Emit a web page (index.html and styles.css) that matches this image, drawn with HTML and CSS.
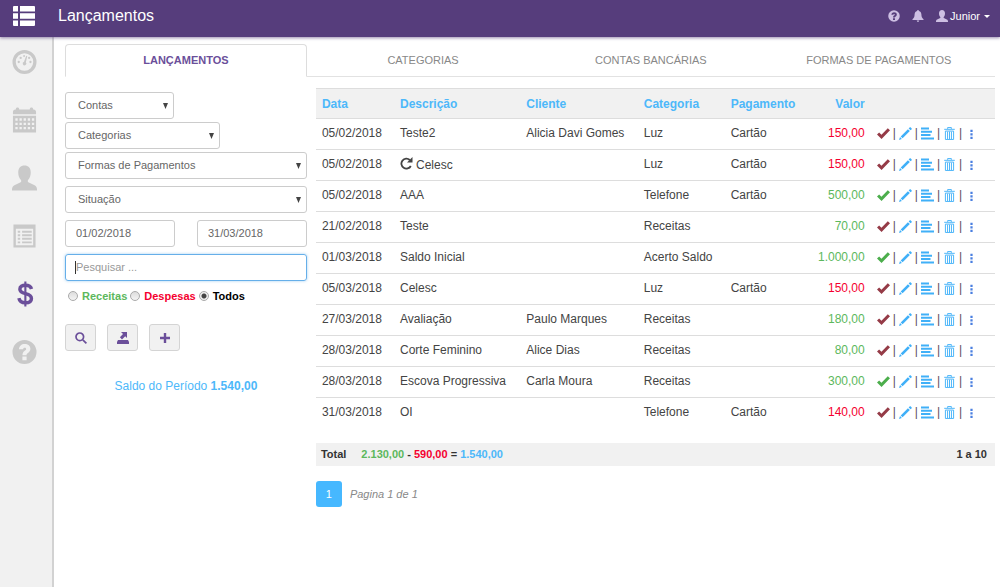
FILE: index.html
```html
<!DOCTYPE html>
<html lang="pt-br">
<head>
    <meta charset="UTF-8">
    <meta name="viewport" content="width=device-width, initial-scale=1">
    <title>Lançamentos</title>
    <link rel="stylesheet" href="styles.css">
</head>
<body>
    <svg class="sprite" aria-hidden="true">
        <symbol id="i-user" viewBox="0 0 26 26">
            <path d="M13 0c-4 0-6.500 2.800-6.500 7 0 3.500 1 6.200 2.800 8 .5.6.4 1.900-.3 2.300L2.500 20.500C.8 21.400 0 22.800 0 25v1h26v-1c0-2.200-.8-3.600-2.500-4.500L17 17.300c-.7-.4-.8-1.700-.3-2.300 1.800-1.800 2.800-4.500 2.800-8 0-4.200-2.500-7-6.500-7z"/>
        </symbol>
        <symbol id="i-help" viewBox="0 0 26 26">
            <path fill-rule="evenodd" d="M13 .5a12.500 12.500 0 1 0 0 25 12.500 12.500 0 0 0 0-25zM7.300 10.200C7.500 6.700 9.800 4.700 13.200 4.700c3.500 0 5.900 1.900 5.900 4.900 0 2.300-1.200 3.500-2.500 4.400-1.100.8-1.500 1.200-1.500 2.400h-4.200c0-2.600.9-3.700 2.300-4.700 1-.7 1.500-1.100 1.500-1.900 0-.8-.6-1.300-1.500-1.300-1.100 0-1.600.7-1.700 1.700zM10.800 17.800h4.400v3.900h-4.400z"/>
        </symbol>
        <symbol id="i-check" viewBox="0 0 14 12">
            <path d="M0 7.200 2.300 5l2.500 2.300L11.600.3 14 2.500 4.900 12z"/>
        </symbol>
        <symbol id="i-pencil" viewBox="0 0 14 14">
            <path d="M11.400.5c.4-.4.900-.4 1.300 0l.8.8c.4.400.4.900 0 1.300l-1 1-2.100-2.100zM9.600 2.300l2.100 2.100-7.800 7.800-2.100-2.100zM1.100 10.900l2 2L0 14z"/>
        </symbol>
        <symbol id="i-lines" viewBox="0 0 13 12">
            <path d="M0 0h8v2H0zM0 3.300h11v2H0zM0 6.600h9.500v2H0zM0 10h13v2H0z"/>
        </symbol>
        <symbol id="i-trash" viewBox="0 0 12 14">
            <path d="M4 2V.6h4V2M.3 2.500h11.400M1.600 4.400h8.800v9H1.600zM3.900 5v8M6 5v8M8.100 5v8" fill="none" stroke="currentColor" stroke-width="1"/>
        </symbol>
        <symbol id="i-dots" viewBox="0 0 14 14">
            <path d="M5.800 3h2.400v2.400H5.800zM5.800 6.800h2.400v2.400H5.800zM5.800 10.600h2.400V13H5.800z"/>
        </symbol>
        <symbol id="i-repeat" viewBox="0 0 13 13">
            <path d="M10.800 9A5 5 0 1 1 9.800 3" fill="none" stroke="currentColor" stroke-width="1.800"/>
            <path d="M12.500 0v5.500H7z"/>
        </symbol>
    </svg>

    <header class="topbar">
        <button type="button" class="menu-btn" aria-label="Menu">
            <svg viewBox="0 0 22 20"><path d="M1 0h4v5.500H0V1a1 1 0 0 1 1-1zM7 0h14a1 1 0 0 1 1 1v4.500H7zM0 7.300h5v5.400H0zM7 7.300h15v5.400H7zM0 14.500h5V20H1a1 1 0 0 1-1-1zM7 14.500h15V19a1 1 0 0 1-1 1H7z"/></svg>
        </button>
        <h1>Lançamentos</h1>
        <nav class="user-nav">
            <a href="#" aria-label="Ajuda"><svg><use href="#i-help"/></svg></a>
            <a href="#" aria-label="Notificações">
                <svg viewBox="0 0 12 13"><path d="M6 0c.7 0 1 .4 1 1 1.800.6 2.700 2 2.700 4 0 2.500.6 3.800 2.300 5v.8H0V10c1.700-1.200 2.300-2.500 2.300-5 0-2 .9-3.400 2.700-4 0-.6.3-1 1-1zM4.600 11.500h2.800C7.200 12.500 6.700 13 6 13s-1.200-.5-1.400-1.500z"/></svg>
            </a>
            <a href="#" class="user"><svg><use href="#i-user"/></svg>Junior <span class="caret"></span></a>
        </nav>
    </header>

    <div class="wrapper">
        <nav class="sidebar">
            <a href="#" aria-label="Painel">
                <svg viewBox="0 0 26 26">
                    <circle cx="13" cy="13" r="10.800" fill="none" stroke="currentColor" stroke-width="3.400"/>
                    <path d="M14.800 6.500l1.100.4-1.500 6.300a1.900 1.900 0 1 1-1.900-.5z"/>
                    <circle cx="7" cy="13" r="1.200"/><circle cx="9" cy="8.800" r="1.200"/><circle cx="12.600" cy="6.700" r="1"/><circle cx="17.800" cy="8.800" r="1.200"/><circle cx="19.200" cy="13" r="1.200"/>
                </svg>
            </a>
            <a href="#" aria-label="Agenda">
                <svg viewBox="0 0 26 26">
                    <path d="M1 7V4.500C1 3 2 2 3.500 2H4c0-1.300.7-2 1.700-2s1.800.7 1.800 2h11c0-1.300.7-2 1.700-2S22 .7 22 2h.5C24 2 25 3 25 4.500V7zM1 8.500h24V26H1z"/>
                    <path class="holes" d="M3.500 12.500h20M3.500 17h20M3.500 21.500h20" fill="none" stroke-width="2.400" stroke-dasharray="2.400 1.900"/>
                </svg>
            </a>
            <a href="#" aria-label="Clientes"><svg><use href="#i-user"/></svg></a>
            <a href="#" aria-label="Relatórios">
                <svg viewBox="0 0 26 26">
                    <path fill-rule="evenodd" d="M1.500 1h23v24h-23zM4 5.500v17h18v-17z"/>
                    <path d="M6 7.500h2.500v2H6zM10.500 7.500h10v2h-10zM6 11.200h2.500v2H6zM10.500 11.200h10v2h-10zM6 14.900h2.500v2H6zM10.500 14.900h10v2h-10zM6 18.600h2.500v2H6zM10.500 18.600h10v2h-10z"/>
                </svg>
            </a>
            <a href="#" class="active" aria-label="Financeiro">
                <svg viewBox="0 0 26 26">
                    <path d="M20.300 7.800C19.500 5 17.300 3.900 14 3.900c-3.500 0-5.800 1.500-5.800 4.100 0 6.300 12 2.900 12 9.600 0 3-2.500 4.600-6.200 4.600-3.800 0-6.200-1.600-6.800-4.900" fill="none" stroke="currentColor" stroke-width="3.600"/>
                    <path d="M12.800 0h2.200v26h-2.200z"/>
                </svg>
            </a>
            <a href="#" aria-label="Suporte"><svg><use href="#i-help"/></svg></a>
        </nav>

        <main class="content">
            <nav class="tabs">
                <a href="#" class="active">LANÇAMENTOS</a>
                <a href="#">CATEGORIAS</a>
                <a href="#">CONTAS BANCÁRIAS</a>
                <a href="#">FORMAS DE PAGAMENTOS</a>
            </nav>

            <div class="panels">
                <form class="filters">
                    <select class="field contas" aria-label="Contas"><option>Contas</option></select>
                    <select class="field categorias" aria-label="Categorias"><option>Categorias</option></select>
                    <select class="field formas" aria-label="Formas de Pagamentos"><option>Formas de Pagamentos</option></select>
                    <select class="field situacao" aria-label="Situação"><option>Situação</option></select>
                    <div class="dates">
                        <input type="text" class="field" value="01/02/2018" aria-label="Data inicial">
                        <input type="text" class="field" value="31/03/2018" aria-label="Data final">
                    </div>
                    <input type="text" class="field search" placeholder="Pesquisar ..." aria-label="Pesquisar">
                    <div class="radios">
                        <label class="green"><input type="radio" name="tipo">Receitas</label>
                        <label class="red"><input type="radio" name="tipo">Despesas</label>
                        <label><input type="radio" name="tipo" checked>Todos</label>
                    </div>
                    <div class="buttons">
                        <button type="button" aria-label="Buscar">
                            <svg viewBox="0 0 12 12"><circle cx="4.800" cy="4.800" r="3.800" fill="none" stroke="currentColor" stroke-width="1.700"/><path d="M8.400 7.200 12 10.800 10.800 12 7.200 8.400z"/></svg>
                        </button>
                        <button type="button" aria-label="Exportar">
                            <svg viewBox="0 0 12 12"><path d="M4 0h6v6L8.200 4.200 5 7.400 2.900 5.300 6 2.100zM1 8h10l1 2H0zM0 10h12v2H0z"/></svg>
                        </button>
                        <button type="button" aria-label="Adicionar">
                            <svg viewBox="0 0 12 12"><path d="M4.800 1h2.400v3.800H11v2.400H7.200V11H4.800V7.200H1V4.800h3.800z"/></svg>
                        </button>
                    </div>
                    <p class="saldo">Saldo do Período <b>1.540,00</b></p>
                </form>

                <section class="list">
                    <table>
                        <colgroup>
                            <col class="c-data"><col class="c-desc"><col class="c-cliente"><col class="c-cat"><col class="c-pag"><col class="c-valor"><col>
                        </colgroup>
                        <thead>
                            <tr>
                                <th>Data</th>
                                <th>Descrição</th>
                                <th>Cliente</th>
                                <th>Categoria</th>
                                <th>Pagamento</th>
                                <th class="valor">Valor</th>
                                <th></th>
                            </tr>
                        </thead>
                        <tbody id="rows"></tbody>
                    </table>

                    <div class="total">
                        <span class="label">Total</span>
                        <span><span class="green">2.130,00</span> - <span class="red">590,00</span> = <span class="blue">1.540,00</span></span>
                        <span class="range">1 a 10</span>
                    </div>

                    <div class="pager">
                        <button type="button">1</button>
                        <em>Pagina 1 de 1</em>
                    </div>
                </section>
            </div>
        </main>
    </div>

    <script src="app.js"></script>
</body>
</html>
```

FILE: styles.css
```css
* {
    box-sizing: border-box;
}

body {
    margin: 0;
    min-height: 100vh;
    display: flex;
    flex-direction: column;
    font-family: "Liberation Sans", Arial, sans-serif;
    font-size: 12px;
    color: #444;
    background-color: #fff;
}

svg {
    display: block;
    fill: currentColor;
}

a {
    color: inherit;
    text-decoration: none;
}

button, input, select {
    font-family: inherit;
}

.sprite {
    position: absolute;
    width: 0;
    height: 0;
}

.green { color: #5cb85c; }
.red { color: #f5002f; }
.blue { color: #4db8fa; }

/* topo */
.topbar {
    position: relative;
    display: flex;
    align-items: center;
    height: 37px;
    padding: 0 10px 5px 13px;
    background-color: #563d7c;
    box-shadow: 0 1px 3px rgba(86, 61, 124, 0.6);
    color: #fff;
}

.topbar h1 {
    margin: 0 0 0 23px;
    font-size: 16px;
    font-weight: normal;
}

.menu-btn {
    padding: 0;
    border: none;
    background: none;
    color: #fff;
    cursor: pointer;
}

.menu-btn svg {
    width: 22px;
    height: 20px;
}

.user-nav {
    display: flex;
    align-items: center;
    gap: 12px;
    margin-left: auto;
    font-size: 11px;
    color: #cdbfe3;
}

.user-nav svg {
    width: 12px;
    height: 12px;
}

.user {
    display: flex;
    align-items: center;
    gap: 2px;
    color: #fff;
}

.user svg {
    color: #cdbfe3;
}

.caret {
    margin-left: 2px;
    border-top: 3px solid #fff;
    border-left: 3px solid transparent;
    border-right: 3px solid transparent;
}

/* menu lateral */
.wrapper {
    display: flex;
    flex: 1;
}

.sidebar {
    display: flex;
    flex-direction: column;
    align-items: center;
    gap: 32px;
    flex: 0 0 54px;
    padding: 12px 4px 0 0;
    background-color: #f1f1f1;
    border-right: 2px solid #d2d2d2;
    color: #c9c9c9;
}

.sidebar svg {
    width: 25px;
    height: 26px;
}

.sidebar .active {
    color: #6b4f9a;
}

.holes {
    stroke: #f1f1f1;
}

/* conteudo */
.content {
    flex: 1;
    padding: 7px 5px 0 11px;
}

.tabs {
    display: grid;
    grid-template-columns: 26fr 25fr 24fr 25fr;
    font-size: 11px;
    text-align: center;
    color: #888;
}

.tabs a {
    height: 33px;
    line-height: 32px;
    border-bottom: 1px solid #e2e2e2;
}

.tabs .active {
    border: 1px solid #ddd;
    border-bottom-color: transparent;
    border-radius: 4px 4px 0 0;
    line-height: 30px;
    font-weight: bold;
    color: #6b4f9a;
}

.panels {
    display: grid;
    grid-template-columns: 26fr 73fr;
    gap: 9px;
    padding-top: 11px;
}

/* filtros */
.filters {
    display: flex;
    flex-direction: column;
    align-items: flex-start;
    padding-top: 4px;
    font-size: 11px;
}

.field {
    width: 100%;
    height: 27px;
    padding: 0 10px 2px;
    border: 1px solid #ccc;
    border-radius: 3px;
    background-color: #fff;
    font-size: 11px;
    color: #666;
}

select.field {
    appearance: none;
    padding: 0 12px 2px;
    background: #fff url("data:image/svg+xml,%3Csvg xmlns='http://www.w3.org/2000/svg' viewBox='0 0 5 6'%3E%3Cpath d='M0 0h5L2.500 6z' fill='%23444'/%3E%3C/svg%3E") no-repeat right 5px center / 5px 6px;
}

.contas {
    width: 45%;
    margin-bottom: 3px;
}

.categorias {
    width: 64%;
    margin-bottom: 3px;
}

.formas,
.situacao {
    margin-bottom: 7px;
}

.dates {
    display: flex;
    gap: 22px;
    margin-bottom: 7px;
}

.search,
.search:focus {
    border-color: #66afe9;
    outline: none;
    box-shadow: 0 0 3px rgba(102, 175, 233, 0.6);
}

/* cursor de texto no campo vazio */
.search:placeholder-shown {
    background: linear-gradient(#333, #333) no-repeat 9px center / 1px 13px;
    caret-color: transparent;
}

.search::placeholder {
    color: #999;
}

.radios {
    display: flex;
    gap: 3px;
    margin-top: 9px;
    padding-left: 3px;
    font-weight: bold;
    color: #000;
}

.radios label {
    display: flex;
    align-items: center;
    gap: 4px;
}

.radios .green { color: #5cb85c; }
.radios .red { color: #f5002f; }

.radios input {
    appearance: none;
    width: 10px;
    height: 10px;
    margin: 0;
    border: 1px solid #aaa;
    border-radius: 50%;
    background: linear-gradient(#ddd, #f4f4f4);
}

.radios input:checked {
    background: radial-gradient(circle, #444 0 2px, #eee 3px);
}

.buttons {
    display: flex;
    gap: 11px;
    margin-top: 22px;
}

.buttons button {
    display: flex;
    align-items: center;
    justify-content: center;
    width: 31px;
    height: 27px;
    padding: 0;
    border: 1px solid #d4d4d4;
    border-radius: 3px;
    background-color: #f1f1f1;
    color: #6b4f9a;
    cursor: pointer;
}

.buttons svg {
    width: 12px;
    height: 12px;
}

.saldo {
    align-self: center;
    margin: 28px 0 0;
    font-size: 12px;
    color: #4db8fa;
}

/* tabela */
table {
    width: 100%;
    table-layout: fixed;
    border-collapse: collapse;
}

.c-data { width: 11.5%; }
.c-desc { width: 18.6%; }
.c-cliente { width: 17.3%; }
.c-cat { width: 12.8%; }
.c-pag { width: 11.8%; }
.c-valor { width: 9.7%; }

th, td {
    height: 31px;
    padding: 0 6px 2px;
    border-top: 1px solid #ddd;
    text-align: left;
    white-space: nowrap;
}

th {
    height: 30px;
    padding-bottom: 0;
    background-color: #f1f1f1;
    color: #4db8fa;
}

.valor {
    text-align: right;
}

.repeat {
    display: inline-block;
    width: 13px;
    height: 13px;
    margin-right: 3px;
    vertical-align: -1px;
}

.actions {
    display: flex;
    align-items: center;
    gap: 3px;
    color: #5d4a5c;
}

.actions button {
    padding: 0;
    border: none;
    background: none;
    color: #40b0f8;
    cursor: pointer;
}

.actions svg {
    width: 13px;
    height: 13px;
}

.actions .paid { color: #4cae4c; }
.actions .open { color: #953b47; }
.actions .more { color: #4a7fe0; }

.total {
    display: flex;
    align-items: center;
    height: 23px;
    margin-top: 14px;
    padding: 0 8px 0 5px;
    background-color: #f1f1f1;
    font-size: 11px;
    font-weight: bold;
    color: #333;
}

.total .label {
    margin-right: 15px;
}

.total .range {
    margin-left: auto;
}

.pager {
    display: flex;
    align-items: center;
    gap: 8px;
    margin-top: 15px;
    font-size: 11px;
    color: #888;
}

.pager button {
    width: 26px;
    height: 26px;
    padding: 0;
    border: none;
    border-radius: 3px;
    background-color: #46b8ff;
    font-size: 11px;
    color: #fff;
}
```

FILE: app.js
```js
const lancamentos = [
    { data: '05/02/2018', desc: 'Teste2', cliente: 'Alicia Davi Gomes', cat: 'Luz', pag: 'Cartão', valor: '150,00', cor: 'red', pago: false },
    { data: '05/02/2018', desc: 'Celesc', cliente: '', cat: 'Luz', pag: 'Cartão', valor: '150,00', cor: 'red', pago: false, repete: true },
    { data: '05/02/2018', desc: 'AAA', cliente: '', cat: 'Telefone', pag: 'Cartão', valor: '500,00', cor: 'green', pago: true },
    { data: '21/02/2018', desc: 'Teste', cliente: '', cat: 'Receitas', pag: '', valor: '70,00', cor: 'green', pago: false },
    { data: '01/03/2018', desc: 'Saldo Inicial', cliente: '', cat: 'Acerto Saldo', pag: '', valor: '1.000,00', cor: 'green', pago: true },
    { data: '05/03/2018', desc: 'Celesc', cliente: '', cat: 'Luz', pag: 'Cartão', valor: '150,00', cor: 'red', pago: false },
    { data: '27/03/2018', desc: 'Avaliação', cliente: 'Paulo Marques', cat: 'Receitas', pag: '', valor: '180,00', cor: 'green', pago: false },
    { data: '28/03/2018', desc: 'Corte Feminino', cliente: 'Alice Dias', cat: 'Receitas', pag: '', valor: '80,00', cor: 'green', pago: false },
    { data: '28/03/2018', desc: 'Escova Progressiva', cliente: 'Carla Moura', cat: 'Receitas', pag: '', valor: '300,00', cor: 'green', pago: true },
    { data: '31/03/2018', desc: 'OI', cliente: '', cat: 'Telefone', pag: 'Cartão', valor: '140,00', cor: 'red', pago: false }
];

function botao(nome, icone, classe) {
    return `<button type="button" class="${classe}" aria-label="${nome}"><svg><use href="#${icone}"/></svg></button>`;
}

document.getElementById('rows').innerHTML = lancamentos.map(l => `
    <tr>
        <td>${l.data}</td>
        <td>${l.repete ? '<svg class="repeat"><use href="#i-repeat"/></svg>' : ''}${l.desc}</td>
        <td>${l.cliente}</td>
        <td>${l.cat}</td>
        <td>${l.pag}</td>
        <td class="valor ${l.cor}">${l.valor}</td>
        <td>
            <div class="actions">
                ${botao('Situação', 'i-check', l.pago ? 'paid' : 'open')}|
                ${botao('Editar', 'i-pencil', 'edit')}|
                ${botao('Detalhes', 'i-lines', 'details')}|
                ${botao('Excluir', 'i-trash', 'delete')}|
                ${botao('Mais', 'i-dots', 'more')}
            </div>
        </td>
    </tr>`).join('');
```
